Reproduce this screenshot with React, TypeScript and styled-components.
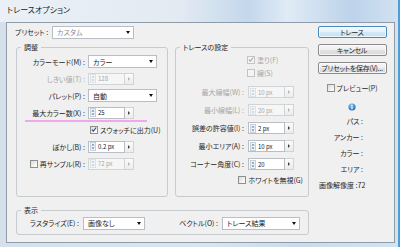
import React from 'react';
import styled, { createGlobalStyle } from 'styled-components';

const FONT = `"Noto Sans CJK JP", "Noto Sans", sans-serif`;

const GlobalStyle = createGlobalStyle`
  html, body {
    margin: 0;
    padding: 0;
  }
  body {
    width: 400px;
    height: 247px;
    overflow: hidden;
    background: #d4dfea;
    font-family: ${FONT};
    font-size: 7px;
    font-feature-settings: 'palt';
    color: #262626;
  }
  * {
    box-sizing: border-box;
  }
`;

const Window = styled.div`
  width: 400px;
  height: 247px;
  display: flex;
  flex-direction: column;
  padding: 0 5px 4px 6px;
  background: linear-gradient(90deg, #d6e0ea 0%, #dbe5ef 50%, #c9dbec 75%, #d5e3f0 100%);
  box-shadow: inset -2px 0 0 #4f9fd6;
`;

const TitleBar = styled.div`
  height: 22px;
  margin: 0 -5px 0 -6px;
  padding: 0 0 4px 7px;
  display: flex;
  align-items: center;
  background: linear-gradient(90deg, #eaf0f6 0%, #e3eaf2 45%, #c3d8ec 62%, #e0ebf5 72%, #bcd3ea 88%, #d3e2f1 100%);
  box-shadow: inset -2px 0 0 #4f9fd6;
`;

const Title = styled.span`
  font-size: 8px;
  color: #1a1a1a;
`;

const Client = styled.div`
  flex: 1;
  display: flex;
  background: #f0f0f0;
  border: 1px solid #8f9daa;
`;

const MainColumn = styled.div`
  width: 302px;
  padding: 2px 0 0 9px;
  display: flex;
  flex-direction: column;
`;

const SideColumn = styled.div`
  width: 70px;
  margin-left: 8px;
  padding-top: 3px;
  display: flex;
  flex-direction: column;
  align-items: center;
`;

const PresetRow = styled.div`
  height: 14px;
  margin-left: -1px;
  display: flex;
  align-items: center;
`;

const PresetLabel = styled.span`
  width: 37px;
  white-space: nowrap;
`;

const GroupsRow = styled.div`
  margin-top: 2px;
  display: flex;
  gap: 7px;
`;

const Group = styled.fieldset<{ $w: number; $h: number }>`
  width: ${(p) => p.$w}px;
  height: ${(p) => p.$h}px;
  min-width: 0;
  margin: 0;
  padding: 0;
  border: 1px solid #c6cbd0;
  border-radius: 3px;
`;

const Legend = styled.legend`
  margin-left: 4px;
  padding: 0 3px;
  height: 12px;
  line-height: 12px;
  font-size: 7px;
`;

const GroupBody = styled.div<{ $row?: boolean }>`
  display: flex;
  flex-direction: ${(p) => (p.$row ? 'row' : 'column')};
  align-items: ${(p) => (p.$row ? 'center' : 'stretch')};
`;

const FieldRow = styled.div<{ $h?: number; $mt?: number; $marked?: boolean }>`
  position: relative;
  height: ${(p) => p.$h ?? 17}px;
  margin-top: ${(p) => p.$mt ?? 0}px;
  display: flex;
  align-items: center;
  &::after {
    content: '';
    display: ${(p) => (p.$marked ? 'block' : 'none')};
    position: absolute;
    left: 8px;
    bottom: -1px;
    width: 122px;
    height: 2px;
    background: #f0a8ea;
  }
`;

const FieldLabel = styled.span<{ $w: number; $pr?: number; $disabled?: boolean }>`
  width: ${(p) => p.$w}px;
  padding-right: ${(p) => p.$pr ?? 3}px;
  display: flex;
  justify-content: flex-end;
  align-items: center;
  gap: 2px;
  white-space: nowrap;
  color: ${(p) => (p.$disabled ? '#a6a6a6' : '#262626')};
`;

const CheckRow = styled.div<{ $h?: number; $pl?: number; $end?: boolean }>`
  height: ${(p) => p.$h ?? 14}px;
  padding-left: ${(p) => p.$pl ?? 0}px;
  padding-right: ${(p) => (p.$end ? 5 : 0)}px;
  display: flex;
  align-items: center;
  justify-content: ${(p) => (p.$end ? 'flex-end' : 'flex-start')};
`;

const CheckLabel = styled.span<{ $disabled?: boolean }>`
  display: flex;
  align-items: center;
  gap: 2px;
  white-space: nowrap;
  color: ${(p) => (p.$disabled ? '#a6a6a6' : '#262626')};
`;

const Box = styled.span<{ $disabled?: boolean }>`
  width: 8px;
  height: 8px;
  flex: none;
  display: inline-flex;
  align-items: center;
  justify-content: center;
  border: 1px solid ${(p) => (p.$disabled ? '#c4c4c4' : '#8e8f8f')};
  background: ${(p) =>
    p.$disabled ? '#f4f4f4' : 'linear-gradient(135deg, #d9d9d9 0%, #f6f6f6 70%, #ffffff 100%)'};
`;

const SelectBox = styled.div<{ $w: number; $muted?: boolean }>`
  width: ${(p) => p.$w}px;
  height: 13px;
  padding: 0 3px 0 4px;
  display: flex;
  align-items: center;
  background: #fff;
  border: 1px solid #b9bec4;
  color: ${(p) => (p.$muted ? '#8d8d8d' : '#262626')};
  white-space: nowrap;
`;

const DropArrow = styled.span`
  margin-left: auto;
  width: 0;
  height: 0;
  border-left: 2.5px solid transparent;
  border-right: 2.5px solid transparent;
  border-top: 3px solid #111;
`;

const Spinner = styled.div`
  display: flex;
  align-items: center;
`;

const SpinField = styled.div<{ $disabled?: boolean }>`
  width: 37px;
  height: 12px;
  padding-left: 1px;
  display: flex;
  align-items: center;
  gap: 2px;
  background: ${(p) => (p.$disabled ? '#f6f6f6' : '#fff')};
  border: 1px solid ${(p) => (p.$disabled ? '#d2d5d8' : '#b9bec4')};
  color: ${(p) => (p.$disabled ? '#a8a8a8' : '#222')};
  font-size: 6px;
  white-space: nowrap;
`;

const StepButton = styled.div<{ $disabled?: boolean }>`
  width: 9px;
  height: 12px;
  display: flex;
  align-items: center;
  justify-content: center;
  border: 1px solid #d0d3d6;
  border-left: none;
  background: linear-gradient(#fbfbfb, #ececec);
  &::before {
    content: '';
    border-top: 2px solid transparent;
    border-bottom: 2px solid transparent;
    border-left: 2.5px solid ${(p) => (p.$disabled ? '#b5b5b5' : '#444')};
  }
`;

const Button = styled.div<{ $primary?: boolean }>`
  width: 69px;
  height: 12px;
  margin-bottom: 6px;
  display: flex;
  align-items: center;
  justify-content: center;
  border: 1px solid ${(p) => (p.$primary ? '#4a88c0' : '#8a8a8a')};
  border-radius: 2px;
  background: ${(p) =>
    p.$primary
      ? 'linear-gradient(#f4fafe, #e3f1fb 50%, #d2e9f8 50%, #c6e2f6)'
      : 'linear-gradient(#f6f6f6, #eeeeee 50%, #e2e2e2 50%, #d8d8d8)'};
  box-shadow: inset 0 0 0 1px rgba(255, 255, 255, 0.7);
  white-space: nowrap;
  letter-spacing: -0.25px;
`;

const PreviewRow = styled.div`
  height: 12px;
  margin-top: 2px;
  display: flex;
  align-items: center;
`;

const InfoIconRow = styled.div`
  height: 12px;
  margin-top: 7px;
  display: flex;
  align-items: center;
  justify-content: center;
`;

const InfoList = styled.div`
  align-self: stretch;
  display: flex;
  flex-direction: column;
`;

const InfoLine = styled.div<{ $left?: boolean }>`
  height: 16px;
  width: ${(p) => (p.$left ? 'auto' : '46px')};
  padding-left: ${(p) => (p.$left ? 2 : 0)}px;
  display: flex;
  align-items: center;
  justify-content: ${(p) => (p.$left ? 'flex-start' : 'flex-end')};
  white-space: nowrap;
`;

const BottomGroupWrap = styled.div`
  margin-top: 7px;
`;

const CheckMark = ({ disabled }: { disabled?: boolean }) => (
  <svg width="7" height="7" viewBox="0 0 7 7">
    <path
      d="M1 3.6 L2.8 5.4 L6 1.2"
      fill="none"
      stroke={disabled ? '#a9a9a9' : '#2b4f7c'}
      strokeWidth="1.3"
    />
  </svg>
);

const Checkbox = ({ checked, disabled }: { checked?: boolean; disabled?: boolean }) => (
  <Box $disabled={disabled}>{checked && <CheckMark disabled={disabled} />}</Box>
);

const SpinArrows = ({ disabled }: { disabled?: boolean }) => (
  <svg width="6" height="9" viewBox="0 0 6 9">
    <rect x="0.5" y="0.5" width="5" height="8" fill="#f3f6f9" stroke={disabled ? '#dde2e6' : '#c5d0da'} />
    <path d="M1.5 3.5 L3 1.8 L4.5 3.5 Z" fill={disabled ? '#b9c3cc' : '#4d78a6'} />
    <path d="M1.5 5.5 L3 7.2 L4.5 5.5 Z" fill={disabled ? '#b9c3cc' : '#4d78a6'} />
  </svg>
);

const Spin = ({ value, disabled }: { value: string; disabled?: boolean }) => (
  <Spinner>
    <SpinField $disabled={disabled}>
      <SpinArrows disabled={disabled} />
      {value}
    </SpinField>
    <StepButton $disabled={disabled} />
  </Spinner>
);

const Select = ({ w, value, muted }: { w: number; value: string; muted?: boolean }) => (
  <SelectBox $w={w} $muted={muted}>
    {value}
    <DropArrow />
  </SelectBox>
);

const InfoIcon = () => (
  <svg width="8" height="8" viewBox="0 0 8 8">
    <defs>
      <radialGradient id="ig" cx="0.4" cy="0.3" r="0.7">
        <stop offset="0" stopColor="#8cc4f0" />
        <stop offset="1" stopColor="#1f6fc0" />
      </radialGradient>
    </defs>
    <circle cx="4" cy="4" r="3.6" fill="url(#ig)" />
    <circle cx="4" cy="2.3" r="0.7" fill="#fff" />
    <rect x="3.4" y="3.4" width="1.2" height="2.8" fill="#fff" />
  </svg>
);

export default function App() {
  return (
    <>
      <GlobalStyle />
      <Window>
        <TitleBar>
          <Title>トレースオプション</Title>
        </TitleBar>
        <Client>
          <MainColumn>
            <PresetRow>
              <PresetLabel>プリセット :</PresetLabel>
              <Select w={82} value="カスタム" muted />
            </PresetRow>

            <GroupsRow>
              <Group $w={152} $h={156}>
                <Legend>調整</Legend>
                <GroupBody>
                  <FieldRow>
                    <FieldLabel $w={71}>カラーモード(M) :</FieldLabel>
                    <Select w={69} value="カラー" />
                  </FieldRow>
                  <FieldRow>
                    <FieldLabel $w={71} $disabled>しきい値(T) :</FieldLabel>
                    <Spin value="128" disabled />
                  </FieldRow>
                  <FieldRow>
                    <FieldLabel $w={71}>パレット(P) :</FieldLabel>
                    <Select w={69} value="自動" />
                  </FieldRow>
                  <FieldRow $marked>
                    <FieldLabel $w={71}>最大カラー数(X) :</FieldLabel>
                    <Spin value="25" />
                  </FieldRow>
                  <CheckRow $h={17} $pl={73}>
                    <CheckLabel>
                      <Checkbox checked />
                      スウォッチに出力(U)
                    </CheckLabel>
                  </CheckRow>
                  <FieldRow>
                    <FieldLabel $w={71}>ぼかし(B) :</FieldLabel>
                    <Spin value="0.2 px" />
                  </FieldRow>
                  <FieldRow>
                    <FieldLabel $w={71}>
                      <Checkbox />
                      再サンプル(R) :
                    </FieldLabel>
                    <Spin value="72 px" disabled />
                  </FieldRow>
                </GroupBody>
              </Group>

              <Group $w={134} $h={156}>
                <Legend>トレースの設定</Legend>
                <GroupBody>
                  <CheckRow $h={13} $pl={71}>
                    <CheckLabel $disabled>
                      <Checkbox checked disabled />
                      塗り(F)
                    </CheckLabel>
                  </CheckRow>
                  <CheckRow $h={13} $pl={71}>
                    <CheckLabel $disabled>
                      <Checkbox disabled />
                      線(S)
                    </CheckLabel>
                  </CheckRow>
                  <FieldRow $h={18} $mt={4}>
                    <FieldLabel $w={72} $pr={4} $disabled>最大線幅(W) :</FieldLabel>
                    <Spin value="10 px" disabled />
                  </FieldRow>
                  <FieldRow $h={18}>
                    <FieldLabel $w={72} $pr={4} $disabled>最小線幅(L) :</FieldLabel>
                    <Spin value="20 px" disabled />
                  </FieldRow>
                  <FieldRow $h={18}>
                    <FieldLabel $w={72} $pr={4}>誤差の許容値(I) :</FieldLabel>
                    <Spin value="2 px" />
                  </FieldRow>
                  <FieldRow $h={18}>
                    <FieldLabel $w={72} $pr={4}>最小エリア(A) :</FieldLabel>
                    <Spin value="10 px" />
                  </FieldRow>
                  <FieldRow $h={18}>
                    <FieldLabel $w={72} $pr={4}>コーナー角度(C) :</FieldLabel>
                    <Spin value="20" />
                  </FieldRow>
                  <CheckRow $h={14} $end>
                    <CheckLabel>
                      <Checkbox />
                      ホワイトを無視(G)
                    </CheckLabel>
                  </CheckRow>
                </GroupBody>
              </Group>
            </GroupsRow>

            <BottomGroupWrap>
              <Group $w={293} $h={31}>
                <Legend>表示</Legend>
                <GroupBody $row>
                  <FieldRow $h={14}>
                    <FieldLabel $w={66} $pr={4}>ラスタライズ(E) :</FieldLabel>
                    <Select w={62} value="画像なし" />
                    <FieldLabel $w={77} $pr={4}>ベクトル(O) :</FieldLabel>
                    <Select w={78} value="トレース結果" />
                  </FieldRow>
                </GroupBody>
              </Group>
            </BottomGroupWrap>
          </MainColumn>

          <SideColumn>
            <Button $primary>トレース</Button>
            <Button>キャンセル</Button>
            <Button>プリセットを保存(V)...</Button>
            <PreviewRow>
              <CheckLabel>
                <Checkbox />
                プレビュー(P)
              </CheckLabel>
            </PreviewRow>
            <InfoIconRow>
              <InfoIcon />
            </InfoIconRow>
            <InfoList>
              <InfoLine>パス :</InfoLine>
              <InfoLine>アンカー :</InfoLine>
              <InfoLine>カラー :</InfoLine>
              <InfoLine>エリア :</InfoLine>
              <InfoLine $left>画像解像度 :72</InfoLine>
            </InfoList>
          </SideColumn>
        </Client>
      </Window>
    </>
  );
}
